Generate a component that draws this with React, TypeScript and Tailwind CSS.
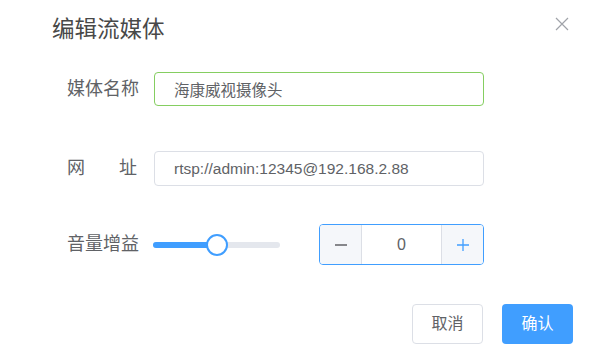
import React, { useState } from "react";

const font = { fontFamily: '"Liberation Sans", "Noto Sans CJK SC", sans-serif' };

const App = () => {
  const [name, setName] = useState("海康威视摄像头");
  const [url, setUrl] = useState("rtsp://admin:12345@192.168.2.88");
  const [gain, setGain] = useState(0);

  return (
    <div className="w-[613px] h-[355px] bg-white text-[#606266] overflow-hidden" style={font}>
      {/* Header */}
      <div className="flex items-start justify-between h-[60px] pl-[52px] pr-[44px] pt-[16px]">
        <h2 className="text-[22.5px] leading-[28px] text-[#484848]">编辑流媒体</h2>
        <button className="mt-[1px] text-[#a0a3a9] cursor-pointer" aria-label="close">
          <svg width="14" height="14" viewBox="0 0 14 14" fill="none" stroke="currentColor" strokeWidth="1.2">
            <path d="M1 1L13 13M13 1L1 13" />
          </svg>
        </button>
      </div>

      {/* Name */}
      <div className="flex items-center mt-[12px] pl-[67px]">
        <label className="w-[87px] text-[18px]">媒体名称</label>
        <input
          value={name}
          onChange={(e) => setName(e.target.value)}
          className="w-[330px] h-[34px] px-[19px] text-[15.5px] text-[#606266] border border-[#85ce61] rounded-[4px] outline-none"
        />
      </div>

      {/* Url */}
      <div className="flex items-center mt-[45px] pl-[67px]">
        <label className="w-[87px] text-[18px] flex">
          <span>网</span>
          <span className="ml-[34px]">址</span>
        </label>
        <input
          value={url}
          onChange={(e) => setUrl(e.target.value)}
          className="w-[330px] h-[35px] px-[19px] text-[15.5px] text-[#606266] border border-[#dcdfe6] rounded-[4px] outline-none"
        />
      </div>

      {/* Gain */}
      <div className="flex items-center mt-[38px] pl-[67px]">
        <label className="w-[86px] text-[18px]">音量增益</label>
        <div className="relative w-[127px] h-[6px] rounded-full bg-[#e4e7ed]">
          <div className="h-full w-[64px] rounded-full bg-[#409eff]" />
          <div className="absolute left-[53px] top-[-8px] w-[22px] h-[22px] rounded-full bg-white border-2 border-[#409eff]" />
        </div>
        <div className="ml-[39px] flex w-[165px] h-[41px] border border-[#409eff] rounded-[4px] overflow-hidden">
          <button
            onClick={() => setGain(gain - 1)}
            className="w-[42px] bg-[#f5f7fa] border-r border-[#dcdfe6] flex items-center justify-center text-[#606266]"
          >
            <svg width="14" height="14" viewBox="0 0 14 14" stroke="currentColor" strokeWidth="1.3">
              <path d="M1 7H13" />
            </svg>
          </button>
          <div className="flex-1 flex items-center justify-center text-[16px] text-[#606266]">{gain}</div>
          <button
            onClick={() => setGain(gain + 1)}
            className="w-[42px] bg-[#f5f7fa] border-l border-[#dcdfe6] flex items-center justify-center text-[#409eff]"
          >
            <svg width="14" height="14" viewBox="0 0 14 14" stroke="currentColor" strokeWidth="1.3">
              <path d="M1 7H13M7 1V13" />
            </svg>
          </button>
        </div>
      </div>

      {/* Footer */}
      <div className="flex justify-end gap-[19px] mt-[39px] pr-[40px]">
        <button className="w-[71px] h-[40px] border border-[#dcdfe6] rounded-[4px] text-[16px] text-[#606266] bg-white">
          取消
        </button>
        <button className="w-[71px] h-[40px] rounded-[4px] text-[16px] text-white bg-[#409eff]">
          确认
        </button>
      </div>
    </div>
  );
};

export default App;
